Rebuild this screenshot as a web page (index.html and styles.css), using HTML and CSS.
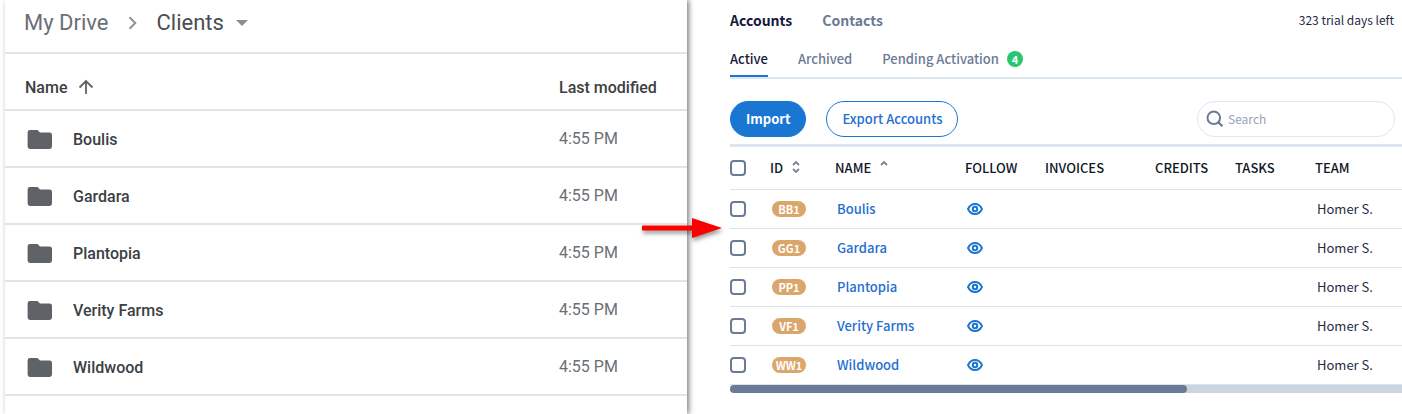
FILE: index.html
```html
<!DOCTYPE html>
<html lang="en">
<head>
<meta charset="utf-8">
<title>Import clients as accounts</title>
<link rel="stylesheet" href="styles.css">
</head>
<body>
<svg class="sprite" aria-hidden="true">
  <symbol id="folder" viewBox="0 0 26 20"><path d="M3 0h7.500l2.500 2.400h9.600A2.400 2.400 0 0 1 25 4.800v11.800A2.400 2.400 0 0 1 22.600 19H3A2.400 2.400 0 0 1 .6 16.600V2.400A2.400 2.400 0 0 1 3 0z" fill="#5f6368"/></symbol>
  <symbol id="eye" viewBox="0 0 16 12"><path d="M1 6C2.600 2.700 5.100 1 8 1s5.400 1.700 7 5c-1.600 3.300-4.100 5-7 5S2.600 9.300 1 6z" fill="none" stroke="#1976d2" stroke-width="1.900" stroke-linejoin="round"/><circle cx="8" cy="6" r="2.200" fill="none" stroke="#1976d2" stroke-width="2"/></symbol>
</svg>
<main class="page">
  <section class="drive">
    <nav class="crumbs" aria-label="Folder path">
      <a href="#">My Drive</a>
      <svg width="10" height="14" viewBox="0 0 10 14"><path d="M1.500 1.200 7.300 7l-5.800 5.800" fill="none" stroke="#909396" stroke-width="2"/></svg>
      <button class="current" type="button">Clients <svg width="12" height="6" viewBox="0 0 12 6"><path d="M0 0h12L6 6z" fill="#8b8e92"/></svg></button>
    </nav>
    <table class="files">
      <thead>
        <tr><th>Name <svg class="up" width="16" height="16" viewBox="0 0 16 16"><path d="M8 15V2M1.500 8.500 8 2l6.500 6.500" fill="none" stroke="#5f6368" stroke-width="1.800"/></svg></th><th class="modified">Last modified</th></tr>
      </thead>
      <tbody>
        <tr><td><span class="file"><svg width="26" height="20"><use href="#folder"/></svg>Boulis</span></td><td class="modified">4:55 PM</td></tr>
        <tr><td><span class="file"><svg width="26" height="20"><use href="#folder"/></svg>Gardara</span></td><td class="modified">4:55 PM</td></tr>
        <tr><td><span class="file"><svg width="26" height="20"><use href="#folder"/></svg>Plantopia</span></td><td class="modified">4:55 PM</td></tr>
        <tr><td><span class="file"><svg width="26" height="20"><use href="#folder"/></svg>Verity Farms</span></td><td class="modified">4:55 PM</td></tr>
        <tr><td><span class="file"><svg width="26" height="20"><use href="#folder"/></svg>Wildwood</span></td><td class="modified">4:55 PM</td></tr>
      </tbody>
    </table>
    <svg class="arrow" width="96" height="40" viewBox="0 0 96 40" aria-hidden="true"><path d="M8 17.500h50V10l30 10-30 10v-7.500H8z" fill="#f00"/></svg>
  </section>

  <section class="accounts">
    <header class="top">
      <nav class="tabs"><a class="on" href="#">Accounts</a><a href="#">Contacts</a></nav>
      <p class="trial">323 trial days left</p>
    </header>
    <nav class="subtabs">
      <a class="on" href="#">Active</a>
      <a href="#">Archived</a>
      <a href="#">Pending Activation <span class="count">4</span></a>
    </nav>
    <div class="toolbar">
      <button class="btn primary" type="button">Import</button>
      <button class="btn" type="button">Export Accounts</button>
      <label class="search">
        <svg width="18" height="18" viewBox="0 0 18 18" aria-hidden="true"><circle cx="7.800" cy="7.800" r="6.300" fill="none" stroke="#6b7a95" stroke-width="2"/><path d="m12.400 12.400 4 3.800" stroke="#6b7a95" stroke-width="2.200"/></svg>
        <input type="search" placeholder="Search" aria-label="Search">
      </label>
    </div>
    <table class="list">
      <colgroup><col class="c-check"><col class="c-id"><col class="c-name"><col class="c-follow"><col class="c-inv"><col class="c-cred"><col class="c-tasks"><col></colgroup>
      <thead>
        <tr>
          <th><input type="checkbox" aria-label="Select all"></th>
          <th>ID <svg class="sort" width="8" height="12" viewBox="0 0 8 12"><path d="m1 4 3-3 3 3M1 8l3 3 3-3" fill="none" stroke="#7a8496" stroke-width="1.800"/></svg></th>
          <th>NAME <svg class="sort" width="8" height="12" viewBox="0 0 8 12"><path d="m1 4 3-3 3 3" fill="none" stroke="#7a8496" stroke-width="1.800"/></svg></th>
          <th>FOLLOW</th><th>INVOICES</th><th>CREDITS</th><th>TASKS</th><th>TEAM</th>
        </tr>
      </thead>
      <tbody>
        <tr><td><input type="checkbox" aria-label="Select Boulis"></td><td><span class="tag">BB1</span></td><td><a href="#">Boulis</a></td><td><svg class="eye" width="16" height="12"><use href="#eye"/></svg></td><td></td><td></td><td></td><td>Homer S.</td></tr>
        <tr><td><input type="checkbox" aria-label="Select Gardara"></td><td><span class="tag">GG1</span></td><td><a href="#">Gardara</a></td><td><svg class="eye" width="16" height="12"><use href="#eye"/></svg></td><td></td><td></td><td></td><td>Homer S.</td></tr>
        <tr><td><input type="checkbox" aria-label="Select Plantopia"></td><td><span class="tag">PP1</span></td><td><a href="#">Plantopia</a></td><td><svg class="eye" width="16" height="12"><use href="#eye"/></svg></td><td></td><td></td><td></td><td>Homer S.</td></tr>
        <tr><td><input type="checkbox" aria-label="Select Verity Farms"></td><td><span class="tag">VF1</span></td><td><a href="#">Verity Farms</a></td><td><svg class="eye" width="16" height="12"><use href="#eye"/></svg></td><td></td><td></td><td></td><td>Homer S.</td></tr>
        <tr><td><input type="checkbox" aria-label="Select Wildwood"></td><td><span class="tag">WW1</span></td><td><a href="#">Wildwood</a></td><td><svg class="eye" width="16" height="12"><use href="#eye"/></svg></td><td></td><td></td><td></td><td>Homer S.</td></tr>
      </tbody>
    </table>
    <div class="track"><div class="thumb"></div></div>
  </section>
</main>
</body>
</html>
```
FILE: styles.css
```css
* { box-sizing: border-box; }
body { margin: 0; background: #fff; }
a { color: inherit; text-decoration: none; }
button { font: inherit; color: inherit; background: none; border: 0; padding: 0; }
table { border-collapse: separate; border-spacing: 0; table-layout: fixed; width: 100%; }
th, td { padding: 0; text-align: left; vertical-align: middle; }
.sprite { display: none; }
.page { display: flex; min-height: 100vh; padding-left: 5px; overflow: hidden; }

.drive {
  position: relative;
  flex: 1 1 682px;
  min-width: 0;
  background: #fff;
  box-shadow: 2px 0 5px rgba(0, 0, 0, .5);
  font-family: Roboto, sans-serif;
  color: #3c4043;
}
.crumbs {
  display: flex;
  align-items: center;
  gap: 19px;
  height: 54px;
  padding: 0 19px 6px;
  border-bottom: 2px solid #e2e4e9;
  font-size: 22px;
  line-height: 28px;
  color: #6b6f74;
}
.current { display: flex; align-items: center; gap: 12px; color: #4a4d51; }
.files th, .files td { height: 57px; border-bottom: 2px solid #e3e4e6; font-size: 16px; line-height: 20px; font-weight: 500; }
.files th:first-child, .files td:first-child { padding-left: 20px; }
.files th { padding-top: 12px; }
.files tbody td:first-child { padding-top: 2px; }
.up { margin-left: 7px; vertical-align: -2px; }
.files .modified { width: 128px; }
.files td.modified { font-weight: 400; color: #6b6f74; }
.file { display: flex; align-items: center; gap: 20px; padding-left: 2px; }
.arrow {
  position: absolute;
  top: 208px;
  right: -43px;
  filter: drop-shadow(1px 3px 2px rgba(0, 0, 0, .4));
}

.accounts {
  flex: 1 1 715px;
  min-width: 0;
  padding-left: 43px;
  font-family: "Noto Sans CJK SC", sans-serif;
  font-size: 13px;
  line-height: 20px;
  color: #1f2a44;
}
.top { display: flex; justify-content: space-between; align-items: center; height: 40px; padding-right: 8px; }
.tabs { display: flex; gap: 30px; font-size: 14px; font-weight: 700; color: #6b7a95; }
.trial { margin: 0; font-size: 12px; }
.tabs .on, .subtabs .on { color: #14183d; }
.subtabs {
  display: flex;
  gap: 30px;
  height: 39px;
  border-bottom: 2px solid #dde7f0;
  font-weight: 500;
  color: #6b7a95;
}
.subtabs a { display: flex; align-items: center; gap: 8px; }
.subtabs .on { border-bottom: 2px solid #1976d2; padding-top: 2px; }
.count {
  width: 16px;
  border-radius: 8px;
  background: #28c76f;
  color: #fff;
  font-size: 11px;
  line-height: 16px;
  font-weight: 700;
  text-align: center;
}
.toolbar { display: flex; gap: 20px; padding: 22px 7px 7px 0; }
.btn { height: 36px; padding: 0 15px; border: 1px solid #1976d2; border-radius: 18px; font-weight: 500; color: #1f6fd0; }
.primary { background: #1976d2; color: #fff; font-weight: 700; }
.search {
  display: flex;
  align-items: center;
  gap: 4px;
  width: 198px;
  height: 36px;
  margin-left: auto;
  padding: 0 8px;
  border: 1px solid #e0e7ef;
  border-radius: 18px;
}
.search svg { flex: none; }
.search input { flex: 1; min-width: 0; padding: 0; border: 0; outline: 0; background: none; font: inherit; font-size: 12px; }
.search input::placeholder { color: #94a3b8; }
.list { border-top: 3px solid #dde6ef; }
.list th { height: 43px; border-bottom: 1px solid #dde3ec; font-weight: 500; color: #101828; white-space: nowrap; }
.list td { height: 39px; border-bottom: 1px solid #dde3ec; }
.list td:nth-child(n+2) { padding-left: 2px; }
.list td a { color: #1f6fd0; font-weight: 500; }
.list input {
  display: block;
  appearance: none;
  width: 16px;
  height: 16px;
  margin: 0;
  border: 2px solid #6b7a95;
  border-radius: 4px;
  background: #fff;
}
.c-check { width: 40px; }
.c-id { width: 65px; }
.c-name { width: 130px; }
.c-follow { width: 80px; }
.c-inv { width: 110px; }
.c-cred, .c-tasks { width: 80px; }
.sort { margin-left: 6px; }
.eye { display: block; }
.tag {
  display: block;
  width: 34px;
  border-radius: 8px;
  background: #dba66c;
  color: #fff;
  font-size: 11px;
  line-height: 16px;
  font-weight: 700;
  text-align: center;
}
.track { height: 8px; border-radius: 4px 0 0 4px; background: #cbd5e1; }
.thumb { width: 68%; height: 8px; border-radius: 4px; background: #6b7a95; }
```
